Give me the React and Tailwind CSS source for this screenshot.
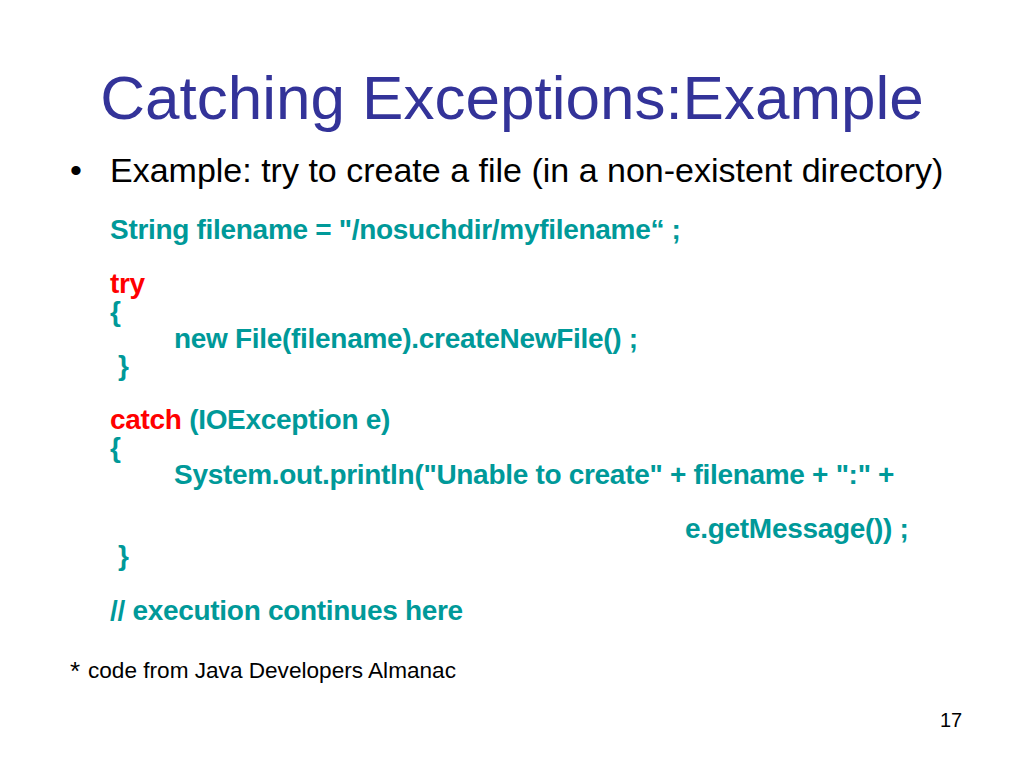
export default function App() {
  const teal = "text-[#009999]";
  const lines = [
    [<span className={teal}>String filename = "/nosuchdir/myfilename“ ;</span>],
    [""],
    [<span className="text-[#ff0000]">try</span>],
    [<span className={teal}>{"{"}</span>],
    [<span className={`${teal} pl-[64px]`}>new File(filename).createNewFile() ;</span>],
    [<span className={`${teal} pl-[8px]`}>{"}"}</span>],
    [""],
    [<><span className="text-[#ff0000]">catch</span><span className={teal}> (IOException e)</span></>],
    [<span className={teal}>{"{"}</span>],
    [<span className={`${teal} pl-[64px]`}>System.out.println("Unable to create" + filename + ":" +</span>],
    [""],
    [<span className={`${teal} pl-[575px]`}>e.getMessage()) ;</span>],
    [<span className={`${teal} pl-[8px]`}>{"}"}</span>],
    [""],
    [<span className={teal}>// execution continues here</span>],
  ];
  return (
    <div className="w-[1024px] h-[768px] bg-white relative overflow-hidden" style={{ fontFamily: '"Liberation Sans", Arial, sans-serif' }}>
      <div className="pt-[62px] text-center text-[62px] leading-[72px] text-[#333399]">Catching Exceptions:Example</div>
      <div className="mt-[16px] flex text-[34px] leading-[40px] text-black">
        <span className="pl-[70px] w-[110px]">•</span>
        <span>Example: try to create a file (in a non-existent directory)</span>
      </div>
      <div className="mt-[26px] pl-[110px] text-[28px] font-bold leading-[27.2px] tracking-[-0.3px] whitespace-pre">
        {lines.map((l, i) => (
          <div key={i} className="h-[27.2px]">{l[0]}</div>
        ))}
      </div>
      <div className="mt-[34px] pl-[70px] flex items-start text-[22.6px] leading-[26px] text-black">
        <span className="text-[26px] w-[18px]">*</span>
        <span>code from Java Developers Almanac</span>
      </div>
      <div className="absolute left-[940px] top-[705px] text-[20px] text-black">17</div>
    </div>
  );
}
